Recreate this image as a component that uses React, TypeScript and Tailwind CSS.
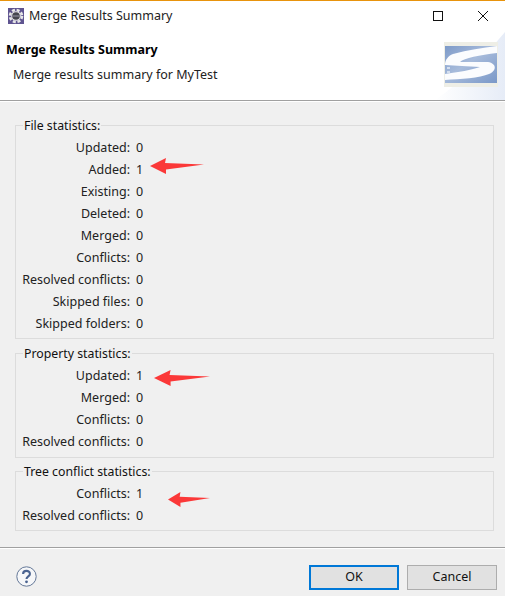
import React from "react";

const font = { fontFamily: '"Noto Sans", sans-serif' };

function Arrow({ className, width, height }: { className: string; width: number; height: number }) {
  return (
    <svg className={`absolute ${className}`} width={width} height={height} viewBox="0 0 54 16" preserveAspectRatio="none">
      <path d="M0 8 L16 0 L15 5 L54 6.5 L16 11.5 L16 16 Z" fill="#fb3838" />
    </svg>
  );
}

function Row({ label, value }: { label: string; value: number }) {
  return (
    <div className="flex h-[22px] items-center">
      <div className="w-[114px] text-right">{label}:</div>
      <div className="ml-[6px]">{value}</div>
    </div>
  );
}

function Group({ title, rows, className, children }: { title: string; rows: [string, number][]; className: string; children?: React.ReactNode }) {
  return (
    <fieldset className={`relative border border-[#dcdcdc] ${className}`}>
      <legend className="ml-[7px] px-px pt-[2px] text-[12.3px] leading-[16px] text-[#111]">{title}</legend>
      <div className="pt-[3px]">
        {rows.map(([label, value]) => (
          <Row key={label} label={label} value={value} />
        ))}
      </div>
      {children}
    </fieldset>
  );
}

function Logo() {
  return (
    <svg width="54" height="46" viewBox="0 0 54 46" className="block">
      <defs>
        <linearGradient id="bl" x1="0" y1="0" x2="1" y2="1">
          <stop offset="0" stopColor="#7d9ac8" />
          <stop offset="0.45" stopColor="#a7bbdb" />
          <stop offset="1" stopColor="#7a98c8" />
        </linearGradient>
      </defs>
      <rect x="0" y="0" width="54" height="45" fill="#eeeee6" />
      <rect x="1" y="4" width="52" height="37" fill="url(#bl)" />
      <path
        d="M53 4 C38 6 24 8 9 12 C4 14 1 18 1 23 C12 24 24 24 36 25 C28 28 14 30 1 32 L1 38 C16 37 36 36 45 32 C50 30 52 26 50 23 C48 21 46 20 44 20 L16 20 C20 16 36 13 53 11 Z"
        fill="#fbfcfe"
      />
      <g fill="#d4deee">
        <rect x="3" y="25" width="3" height="2" />
        <rect x="3" y="29" width="3" height="2" />
      </g>
    </svg>
  );
}

export default function App() {
  return (
    <div className="flex h-[596px] w-[505px] flex-col overflow-hidden bg-[#f0f0f0] text-[12.5px] text-[#222]" style={font}>
      {/* Title bar */}
      <div className="h-[1px] bg-[#e8930c]" />
      <div className="flex h-[29px] items-center bg-white pl-2 pt-[1px]">
        <svg width="16" height="16" viewBox="0 0 16 16">
          <rect width="16" height="16" fill="#5f5490" />
          <circle cx="8" cy="8" r="6" fill="none" stroke="#e8e8e8" strokeWidth="2.6" strokeDasharray="3 1.7" />
          <circle cx="8" cy="8" r="4.8" fill="#e8e8e8" />
          <circle cx="8" cy="8" r="3.8" fill="#45454f" />
          <rect x="4.5" y="7.4" width="7" height="1.2" fill="#8a8a98" />
        </svg>
        <div className="ml-[5px] text-[#222]">Merge Results Summary</div>
        <div className="ml-auto flex items-center">
          <svg width="12" height="12" viewBox="0 0 12 12" className="mr-[33px]">
            <rect x="1.5" y="1.5" width="9" height="9" fill="none" stroke="#111" strokeWidth="1" />
          </svg>
          <svg width="12" height="12" viewBox="0 0 12 12" className="mr-[16px]">
            <path d="M1 1 L11 11 M11 1 L1 11" stroke="#111" strokeWidth="1" />
          </svg>
        </div>
      </div>

      {/* Banner */}
      <div className="relative flex h-[71px] flex-col border-b border-[#a0a0a0] bg-white pl-[6px]">
        <svg className="absolute bottom-0 right-0" width="70" height="70" viewBox="0 0 70 70">
          <defs>
            <linearGradient id="wedge" x1="0" y1="0" x2="1" y2="0">
              <stop offset="0" stopColor="#ffffff" />
              <stop offset="1" stopColor="#e6ecf7" />
            </linearGradient>
          </defs>
          <path d="M70 2 L70 70 L0 70 C30 50 50 25 70 2 Z" fill="url(#wedge)" />
        </svg>
        <div className="relative mt-[10px] font-bold leading-[20px] text-black">Merge Results Summary</div>
        <div className="relative ml-[7px] mt-[5px] leading-[20px]">Merge results summary for MyTest</div>
        <div className="absolute right-[7px] top-[12px]">
          <Logo />
        </div>
      </div>
      <div className="h-px bg-white" />

      {/* Groups */}
      <div className="flex flex-1 flex-col pl-[15px] pr-[11px] pt-[14px]">
        <Group
          title="File statistics:"
          className="h-[223px]"
          rows={[
            ["Updated", 0],
            ["Added", 1],
            ["Existing", 0],
            ["Deleted", 0],
            ["Merged", 0],
            ["Conflicts", 0],
            ["Resolved conflicts", 0],
            ["Skipped files", 0],
            ["Skipped folders", 0],
          ]}
        >
          <Arrow className="left-[134px] top-[24px]" width={54} height={16} />
        </Group>
        <Group
          title="Property statistics:"
          className="mt-[5px] h-[114px]"
          rows={[
            ["Updated", 1],
            ["Merged", 0],
            ["Conflicts", 0],
            ["Resolved conflicts", 0],
          ]}
        >
          <Arrow className="left-[138px] top-[8px]" width={56} height={16} />
        </Group>
        <Group
          title="Tree conflict statistics:"
          className="mt-[4px] h-[69px]"
          rows={[
            ["Conflicts", 1],
            ["Resolved conflicts", 0],
          ]}
        >
          <Arrow className="left-[152px] top-[12px]" width={42} height={15} />
        </Group>
      </div>

      {/* Footer */}
      <div className="h-px bg-[#a0a0a0]" />
      <div className="h-px bg-white" />
      <div className="flex h-[47px] items-start pl-[16px] pr-[8px] pt-[16px]">
        <svg width="21" height="21" viewBox="0 0 21 21" className="mt-[1px]">
          <circle cx="10.5" cy="10.5" r="9.7" fill="#f6f7f9" stroke="#647898" strokeWidth="1" />
          <path d="M7.1 8 C7.1 3.9 13.9 3.9 13.9 7.9 C13.9 10.3 10.5 10.4 10.5 13" fill="none" stroke="#4a6390" strokeWidth="2.1" />
          <circle cx="10.5" cy="15.8" r="1.4" fill="#4a6390" />
        </svg>
        <button className="ml-auto h-[25px] w-[90px] border-2 border-[#0078d7] bg-[#e1e1e1] text-[#111]">OK</button>
        <button className="ml-[8px] h-[25px] w-[90px] border border-[#adadad] bg-[#e1e1e1] text-[#111]">Cancel</button>
      </div>
    </div>
  );
}
